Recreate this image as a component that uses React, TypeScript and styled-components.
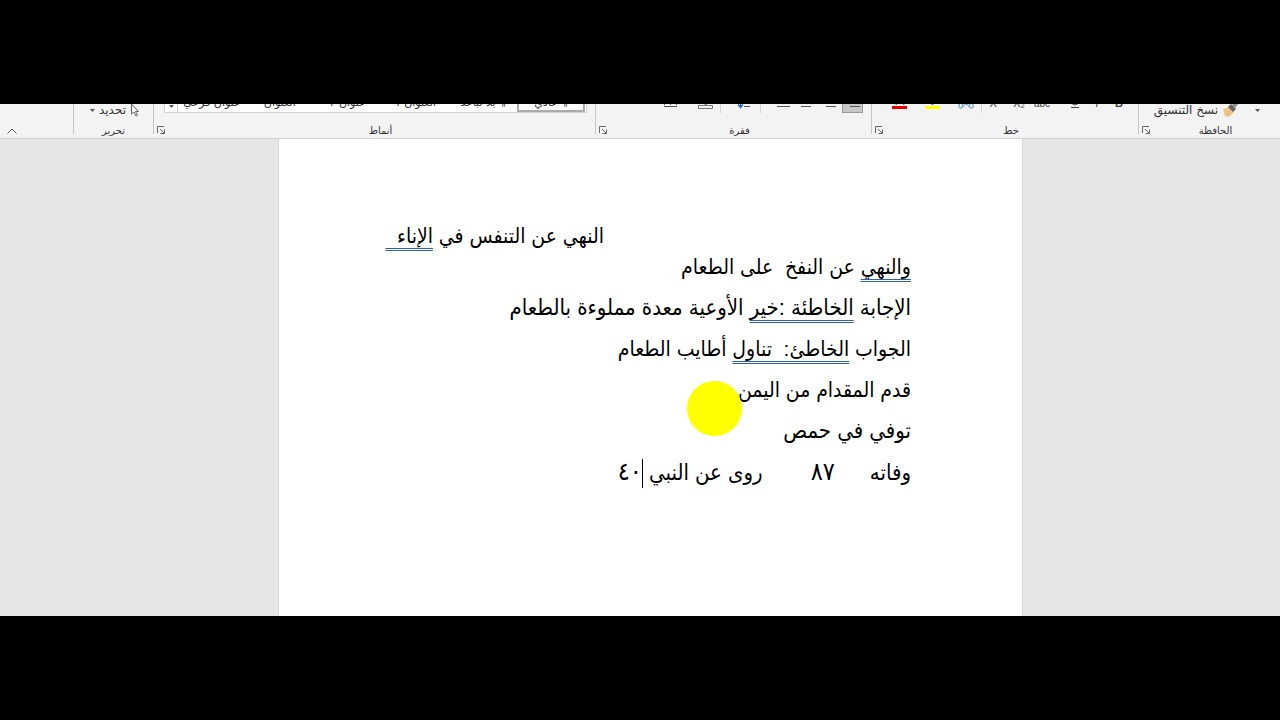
import React from 'react';
import styled, { createGlobalStyle } from 'styled-components';

const GlobalStyle = createGlobalStyle`
  * { box-sizing: border-box; }
  body { margin: 0; background: #000; }
`;

const Screen = styled.div`
  display: flex;
  flex-direction: column;
  min-height: 100vh;
  padding: 104px 0;
  background: #000;
  direction: rtl;
`;

const Window = styled.main`
  flex: 1;
  display: flex;
  flex-direction: column;
  background: #e6e6e6;
`;

const Ribbon = styled.header`
  display: grid;
  grid-template-columns: 142fr 267fr 276fr 442fr 80fr 73fr;
  background: #f3f3f3;
  border-bottom: 1px solid #d2d2d2;
  font-family: 'DejaVu Sans', sans-serif;
  font-size: 10px;
  color: #333;
`;

const Group = styled.section<{ $last?: boolean }>`
  display: flex;
  flex-direction: column;
  min-width: 0;
  margin-bottom: 4px;
  border-left: ${(p) => (p.$last ? 'none' : '1px solid #c6c6c6')};
`;

const Tools = styled.div<{ $start?: number; $low?: boolean }>`
  display: flex;
  align-items: flex-end;
  height: 20px;
  overflow: hidden;
  padding-bottom: ${(p) => (p.$low ? 6 : 11)}px;
  padding-right: ${(p) => p.$start ?? 0}px;
`;

const GroupFooter = styled.div`
  display: flex;
  align-items: center;
  height: 10px;
  line-height: 10px;
`;

const GroupLabel = styled.span`
  flex: 1;
  padding-top: 4px;
  text-align: center;
  line-height: 14px;
`;

const ToolButton = styled.button<{ $w?: number; $on?: boolean }>`
  display: flex;
  flex: none;
  align-items: center;
  justify-content: center;
  width: ${(p) => p.$w ?? 24}px;
  height: 22px;
  padding: 0;
  border: ${(p) => (p.$on ? '1px solid #9a9a9a' : 'none')};
  background: ${(p) => (p.$on ? '#c6c6c6' : 'transparent')};
`;

const TextButton = styled.button`
  display: flex;
  flex: none;
  align-items: center;
  gap: 4px;
  height: 16px;
  padding: 0;
  border: none;
  background: transparent;
  font: inherit;
  font-size: 12px;
  color: inherit;
  white-space: nowrap;
`;

const Launcher = styled.button`
  display: flex;
  align-items: flex-end;
  justify-content: flex-end;
  width: 12px;
  height: 10px;
  padding: 0 0 0 3px;
  border: none;
  background: transparent;
`;

const Divider = styled.span`
  flex: none;
  width: 1px;
  height: 22px;
  background: #d4d4d4;
`;

const Spacer = styled.span<{ $w: number }>`
  flex: none;
  width: ${(p) => p.$w}px;
`;

const Gallery = styled.div`
  display: flex;
  flex: 1;
  align-items: flex-end;
  height: 40px;
  margin: 0 8px 0 10px;
  padding-right: 1px;
  background: #fff;
  border: 1px solid #d4d4d4;
`;

const StyleItem = styled.button<{ $on?: boolean }>`
  flex: 1;
  height: 36px;
  padding: 17px 0 0;
  border: 2px solid ${(p) => (p.$on ? '#ababab' : 'transparent')};
  background: transparent;
  font: inherit;
  font-size: 11px;
  line-height: 14px;
  color: #333;
  white-space: nowrap;
`;

const GalleryMore = styled.button`
  display: flex;
  align-items: flex-end;
  justify-content: center;
  width: 13px;
  height: 38px;
  padding: 0 0 4px;
  border: none;
  border-right: 1px solid #c6c6c6;
  background: transparent;
`;

const Collapse = styled.button`
  display: flex;
  align-self: flex-end;
  margin: 24px 0 0 7px;
  padding: 0;
  border: none;
  background: transparent;
`;

const Workspace = styled.div`
  flex: 1;
  display: grid;
  grid-template-columns: 257fr 745fr 278fr;
`;

const Page = styled.article`
  grid-column: 2;
  position: relative;
  min-width: 0;
  padding: 81px 111px 0 80px;
  background: #fff;
  border-left: 1px solid #d8d8d8;
  border-right: 1px solid #d8d8d8;
  font-family: 'Liberation Sans', 'DejaVu Sans Condensed', 'DejaVu Sans', sans-serif;
  font-size: 21px;
  color: #000;
`;

const Line = styled.p<{ $indent?: number; $large?: boolean }>`
  height: ${(p) => (p.$indent ? 26 : 41)}px;
  margin: 0 ${(p) => p.$indent ?? 0}px 0 0;
  font-size: ${(p) => (p.$large ? 22 : 21)}px;
  line-height: ${(p) => (p.$indent ? 31 : 41)}px;
  white-space: pre;
`;

const Flagged = styled.span`
  text-decoration: underline double #2f62a8 1px;
  text-underline-offset: 5px;
  text-decoration-skip-ink: none;
`;

const Numeral = styled.span`
  font-size: 25px;
`;

const Gap = styled.span<{ $w: number }>`
  display: inline-block;
  width: ${(p) => p.$w}px;
`;

const Caret = styled.span`
  display: inline-block;
  width: 1px;
  height: 29px;
  vertical-align: -8px;
  background: #000;
`;

const Pointer = styled.div`
  position: absolute;
  top: 242px;
  left: 408px;
  width: 55px;
  height: 55px;
  border-radius: 50%;
  background: #ff0;
`;

const LaunchMark = () => (
  <Launcher aria-label="المزيد">
    <svg width="8" height="8" viewBox="0 0 8 8" fill="none" stroke="#666">
      <path d="M.5 7V.5H7M3 3l4 4M7.500 3.500v4h-4" />
    </svg>
  </Launcher>
);

const Arrow = () => (
  <svg width="5" height="3" viewBox="0 0 5 3"><path d="M0 0h5L2.500 3z" fill="#555" /></svg>
);

const Lines = ({ x, w }: { x: number; w: number }) => (
  <svg width="16" height="16" viewBox="0 0 16 16" stroke="#555">
    <path d={`M1 2.500h14M${x} 7.500h${w}M${x} 12.500h${w}`} />
  </svg>
);

const Glyph = ({ children, style, weight }: { children: string; style?: string; weight?: number }) => (
  <svg width="16" height="16" viewBox="0 0 16 16">
    <text x="8" y="13" textAnchor="middle" fontFamily="Liberation Sans, sans-serif" fontSize="11" fontStyle={style} fontWeight={weight} fill="#444">
      {children}
    </text>
  </svg>
);

const styleNames = ['¶ عادي', '¶ بلا تباعد', 'العنوان ١', 'عنوان ٢', 'العنوان', 'عنوان فرعي'];

export default function App() {
  return (
    <Screen lang="ar">
      <GlobalStyle />
      <Window>
        <Ribbon>
          <Group>
            <Tools $start={20} $low>
              <TextButton aria-label="لصق"><Arrow /></TextButton>
              <Spacer $w={17} />
              <TextButton>
                <svg width="16" height="16" viewBox="0 0 16 16">
                  <path d="M1 7l6-2 5 5-5 5-4-1z" fill="#ecc384" />
                  <path d="M6 5l3-3 5 5-3 3z" fill="#666" />
                  <path d="M10 3l3-3 3 2-3 4z" fill="#8a8a8a" />
                </svg>
                نسخ التنسيق
              </TextButton>
            </Tools>
            <GroupFooter><GroupLabel>الحافظة</GroupLabel><LaunchMark /></GroupFooter>
          </Group>

          <Group>
            <Tools $start={8}>
              <ToolButton $w={22} aria-label="غامق"><Glyph weight={700}>B</Glyph></ToolButton>
              <ToolButton $w={22} aria-label="مائل"><Glyph style="italic">I</Glyph></ToolButton>
              <ToolButton $w={22} aria-label="تسطير">
                <svg width="16" height="16" viewBox="0 0 16 16" fill="none" stroke="#444"><path d="M5 3v5q0 3 3 3t3-3V3M4 13.500h8" /></svg>
              </ToolButton>
              <Spacer $w={11} />
              <ToolButton $w={22} aria-label="يتوسطه خط">
                <svg width="18" height="16" viewBox="0 0 18 16">
                  <text x="9" y="13" textAnchor="middle" fontFamily="Liberation Sans, sans-serif" fontSize="10" fill="#444">abc</text>
                  <path d="M1 9.500h16" stroke="#444" />
                </svg>
              </ToolButton>
              <ToolButton aria-label="منخفض"><Glyph>X₂</Glyph></ToolButton>
              <ToolButton aria-label="مرتفع"><Glyph>X²</Glyph></ToolButton>
              <Spacer $w={1} />
              <Divider />
              <Spacer $w={1} />
              <ToolButton $w={28} aria-label="تأثيرات النص">
                <svg width="16" height="16" viewBox="0 0 16 16" fill="none" stroke="#4a83c4"><path d="M4 12L8 2l4 10M5 8h6M3 9c-3 1-3 6 0 5s3-4 5-4 2 3 5 4 3-4 0-5" /></svg>
              </ToolButton>
              <Spacer $w={3} />
              <ToolButton $w={32} aria-label="لون التمييز">
                <svg width="16" height="16" viewBox="0 0 16 16"><path d="M6 11l6-8 2 2-6 6z" fill="#666" /><path d="M0 12h15v3H0z" fill="#ff0" /></svg>
              </ToolButton>
              <ToolButton $w={34} aria-label="لون الخط">
                <svg width="16" height="16" viewBox="0 0 16 16"><path d="M4 11L8 2l4 9M5 9h6" stroke="#444" fill="none" /><path d="M0 12h15v3H0z" fill="#e80000" /></svg>
              </ToolButton>
            </Tools>
            <GroupFooter><GroupLabel>خط</GroupLabel><LaunchMark /></GroupFooter>
          </Group>

          <Group>
            <Tools $start={8}>
              <ToolButton $w={21} $on aria-label="محاذاة لليمين"><Lines x={5} w={10} /></ToolButton>
              <ToolButton $w={23} aria-label="توسيط"><Lines x={3} w={10} /></ToolButton>
              <ToolButton $w={25} aria-label="محاذاة لليسار"><Lines x={2} w={10} /></ToolButton>
              <ToolButton $w={20} aria-label="ضبط"><Lines x={1} w={13} /></ToolButton>
              <Spacer $w={13} />
              <Divider />
              <Spacer $w={9} />
              <ToolButton $w={16} aria-label="تباعد الأسطر">
                <svg width="16" height="16" viewBox="0 0 16 16" fill="none"><path d="M5.500 2v12M3 10.500l2.500 3L8 10.500" stroke="#2f6fb5" strokeWidth="1.500" /><path d="M9 2.500h6M9 7.500h6M9 12.500h6" stroke="#555" /></svg>
              </ToolButton>
              <Spacer $w={14} />
              <Divider />
              <Spacer $w={5} />
              <ToolButton $w={18} aria-label="تظليل">
                <svg width="16" height="16" viewBox="0 0 16 16" fill="none" stroke="#777"><path d="M5 9l4-6 3 4-4 4z" /><path d="M.5 11.500h14v3H.5z" /></svg>
              </ToolButton>
              <Spacer $w={17} />
              <ToolButton $w={18} aria-label="حدود">
                <svg width="16" height="16" viewBox="0 0 16 16" stroke="#555"><path d="M1 12.500h13" /><path d="M1.500 1v10M7.500 1v10M13.500 1v10" strokeDasharray="1 2" /></svg>
              </ToolButton>
            </Tools>
            <GroupFooter><GroupLabel>فقرة</GroupLabel><LaunchMark /></GroupFooter>
          </Group>

          <Group>
            <Tools>
              <Gallery>
                {styleNames.map((name, i) => (
                  <StyleItem key={name} $on={i === 0}>{name}</StyleItem>
                ))}
                <GalleryMore aria-label="المزيد"><Arrow /></GalleryMore>
              </Gallery>
            </Tools>
            <GroupFooter><GroupLabel>أنماط</GroupLabel><LaunchMark /></GroupFooter>
          </Group>

          <Group>
            <Tools $start={13} $low>
              <TextButton>
                <svg width="10" height="14" viewBox="0 0 10 14"><path d="M1.500 1v10l2.500-2 2 4 1.500-.8-2-3.700h3z" fill="#fff" stroke="#666" /></svg>
                تحديد
                <Arrow />
              </TextButton>
            </Tools>
            <GroupFooter><GroupLabel>تحرير</GroupLabel></GroupFooter>
          </Group>

          <Group $last>
            <Collapse aria-label="طي الشريط">
              <svg width="10" height="6" viewBox="0 0 10 6" fill="none" stroke="#555"><path d="M.5 5.500L5 1l4.500 4.500" /></svg>
            </Collapse>
          </Group>
        </Ribbon>

        <Workspace>
          <Page>
            <Line $indent={307}>النهي عن التنفس في <Flagged>الإناء{'\u00a0\u00a0'}</Flagged></Line>
            <Line><Flagged>والنهي</Flagged> عن النفخ  على الطعام</Line>
            <Line $large>الإجابة <Flagged>الخاطئة :خير</Flagged> الأوعية معدة مملوءة بالطعام</Line>
            <Line>الجواب <Flagged>الخاطئ:  تناول</Flagged> أطايب الطعام</Line>
            <Line>قدم المقدام من اليمن</Line>
            <Line $large>توفي في حمص</Line>
            <Line $large>وفاته<Gap $w={35} /><Numeral>٨٧</Numeral><Gap $w={48} />روى عن النبي <Caret /><Numeral>٤٠</Numeral></Line>
            <Pointer />
          </Page>
        </Workspace>
      </Window>
    </Screen>
  );
}
